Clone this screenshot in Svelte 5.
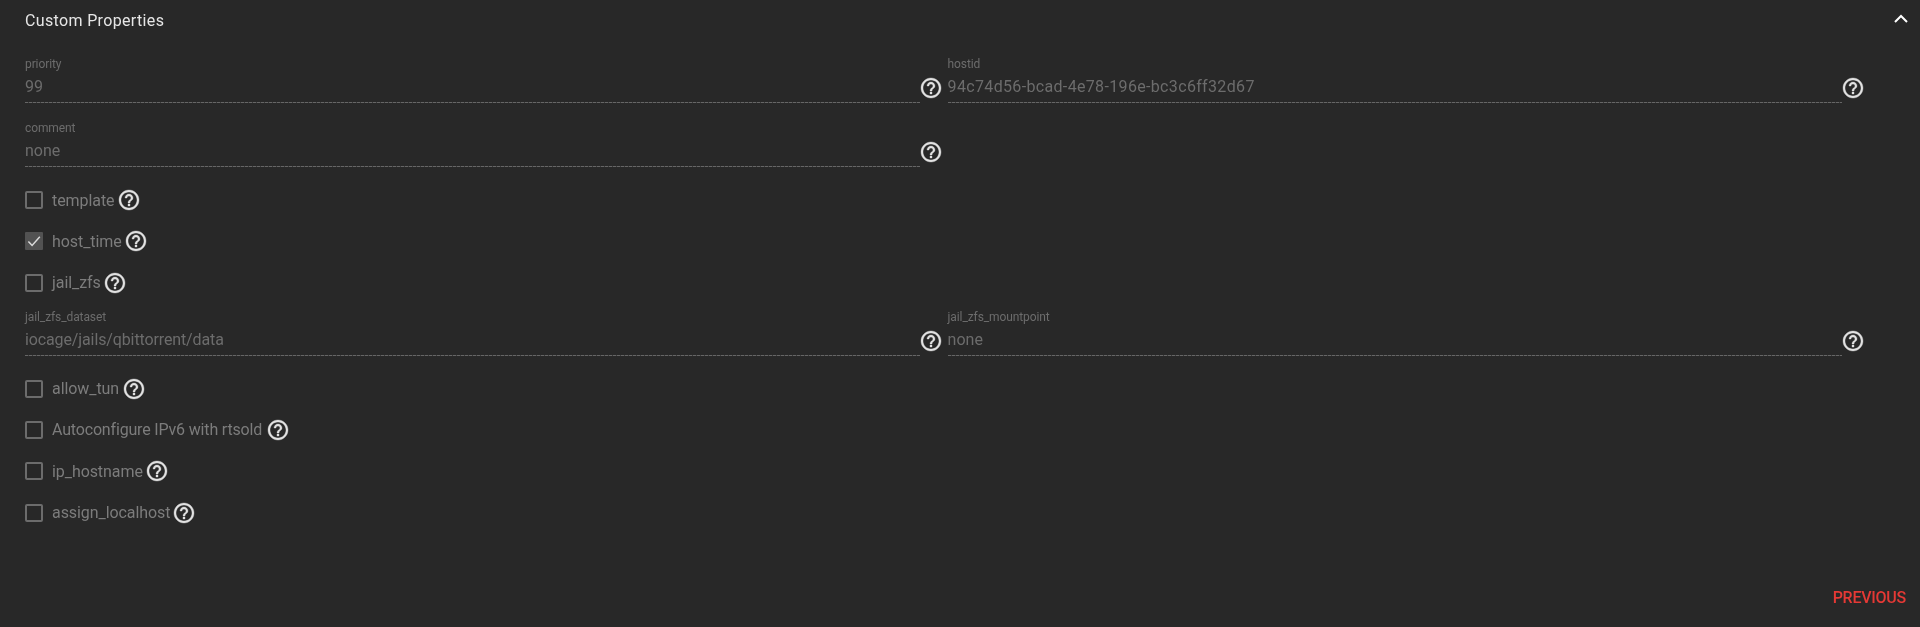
<script>
  const help = "M11 18h2v-2h-2v2zm1-16C6.48 2 2 6.48 2 12s4.48 10 10 10 10-4.48 10-10S17.52 2 12 2zm0 18c-4.41 0-8-3.59-8-8s3.59-8 8-8 8 3.59 8 8-3.59 8-8 8zm0-14c-2.21 0-4 1.79-4 4h2c0-1.1.9-2 2-2s2 .9 2 2c0 2-3 1.75-3 5h2c0-2.25 3-2.5 3-5 0-2.21-1.79-4-4-4z";
</script>

{#snippet icon()}
  <svg class="help" viewBox="0 0 24 24" aria-hidden="true"><path d={help} /></svg>
{/snippet}

{#snippet field(label, value, cls = "")}
  <div class="field">
    <div class="input">
      <span class="lab">{label}</span>
      <span class="val {cls}">{value}</span>
    </div>
    {@render icon()}
  </div>
{/snippet}

{#snippet check(label, checked = false, cls = "")}
  <div class="check">
    <span class="box" class:on={checked}>
      {#if checked}
        <svg viewBox="0 0 18 18" aria-hidden="true"><path d="M3.4 9.4 7.1 13.4 14.8 4.8" /></svg>
      {/if}
    </span>
    <span class="chk-label {cls}">{label}</span>
    {@render icon()}
  </div>
{/snippet}

<main class="page">
  <header class="head">
    <h2>Custom Properties</h2>
    <svg class="chev" viewBox="0 0 24 24" aria-hidden="true"><path d="M6 15l6-6 6 6" /></svg>
  </header>

  <section class="grid g1">
    {@render field("priority", "99")}
    {@render field("hostid", "94c74d56-bcad-4e78-196e-bc3c6ff32d67", "wide")}
    {@render field("comment", "none")}
  </section>

  <section class="checks c1">
    {@render check("template")}
    {@render check("host_time", true)}
    {@render check("jail_zfs")}
  </section>

  <section class="grid g2">
    {@render field("jail_zfs_dataset", "iocage/jails/qbittorrent/data", "narrow")}
    {@render field("jail_zfs_mountpoint", "none")}
  </section>

  <section class="checks c2">
    {@render check("allow_tun", false, "roomy")}
    {@render check("Autoconfigure IPv6 with rtsold", false, "tight")}
    {@render check("ip_hostname")}
    {@render check("assign_localhost")}
  </section>

  <footer class="foot">
    <span class="prev">PREVIOUS</span>
  </footer>
</main>

<style>
  :global(body) {
    margin: 0;
    background: #282828;
  }
  .page {
    height: 627px;
    background: #282828;
    font-family: Roboto, "Liberation Sans", sans-serif;
    color: #e0e0e0;
    overflow: hidden;
    box-sizing: border-box;
    display: flex;
    flex-direction: column;
    filter: blur(0.35px);
  }
  .head {
    height: 42px;
    padding: 0 10px 0 25px;
    display: flex;
    align-items: center;
    justify-content: space-between;
  }
  h2 {
    margin: 0;
    font-size: 16px;
    font-weight: 400;
    line-height: 44px;
    letter-spacing: 0.35px;
    color: #e6e6e6;
  }
  .chev {
    width: 24px;
    height: 24px;
    margin-top: -4px;
    margin-right: -3px;
    fill: none;
    stroke: #fff;
    stroke-width: 2;
  }
  .grid {
    display: grid;
    grid-template-columns: 922.6px 922.6px;
    padding-left: 25px;
    row-gap: 12px;
  }
  .g1 { margin-top: 9px; }
  .g2 { margin-top: 9px; }
  .field {
    display: flex;
    align-items: flex-end;
    height: 52px;
  }
  .input {
    width: 894.6px;
    height: 47px;
    padding-top: 1px;
    box-sizing: border-box;
    display: flex;
    flex-direction: column;
    background: repeating-linear-gradient(90deg, #666 0 3px, #3c3c3c 3px 4px) left bottom / 100% 1px no-repeat;
  }
  .lab {
    font-size: 12px;
    line-height: 14px;
    letter-spacing: -0.1px;
    color: #6c6c6c;
  }
  .val {
    font-size: 16px;
    line-height: 19px;
    margin-top: 6px;
    color: #6c6c6c;
  }
  .val.wide { letter-spacing: 0.34px; }
  .val.narrow { letter-spacing: -0.12px; }
  .help {
    width: 24px;
    height: 24px;
    fill: #e2e2e2;
    stroke: #e2e2e2;
    stroke-width: 0.35;
    flex: none;
  }
  .field .help {
    margin: 0 0 3px -1px;
  }
  .checks {
    padding-left: 25px;
    display: flex;
    flex-direction: column;
    gap: 17.33px;
  }
  .c1 { margin-top: 21px; }
  .c2 { margin-top: 21px; }
  .check {
    display: flex;
    align-items: center;
    height: 24px;
  }
  .box {
    width: 18px;
    height: 18px;
    box-sizing: border-box;
    border: 2px solid #6c6c6c;
    border-radius: 2px;
    flex: none;
    display: block;
  }
  .box.on {
    background: #525252;
    border: none;
    border-radius: 1px;
  }
  .box svg {
    display: block;
    width: 18px;
    height: 18px;
    fill: none;
    stroke: #dadada;
    stroke-width: 1.5;
  }
  .chk-label {
    margin-left: 9px;
    margin-right: 2px;
    font-size: 16px;
    letter-spacing: -0.07px;
    color: #7c7c7c;
  }
  .chk-label.tight {
    letter-spacing: -0.17px;
    margin-right: 4px;
  }
  .chk-label.roomy { margin-right: 3px; }
  .foot {
    margin-top: auto;
    height: 40px;
    padding-right: 14px;
    display: flex;
    justify-content: flex-end;
    align-items: flex-start;
  }
  .prev {
    font-size: 16px;
    font-weight: 500;
    line-height: 20px;
    letter-spacing: -0.25px;
    color: #e53935;
    margin-top: 1px;
  }
</style>
